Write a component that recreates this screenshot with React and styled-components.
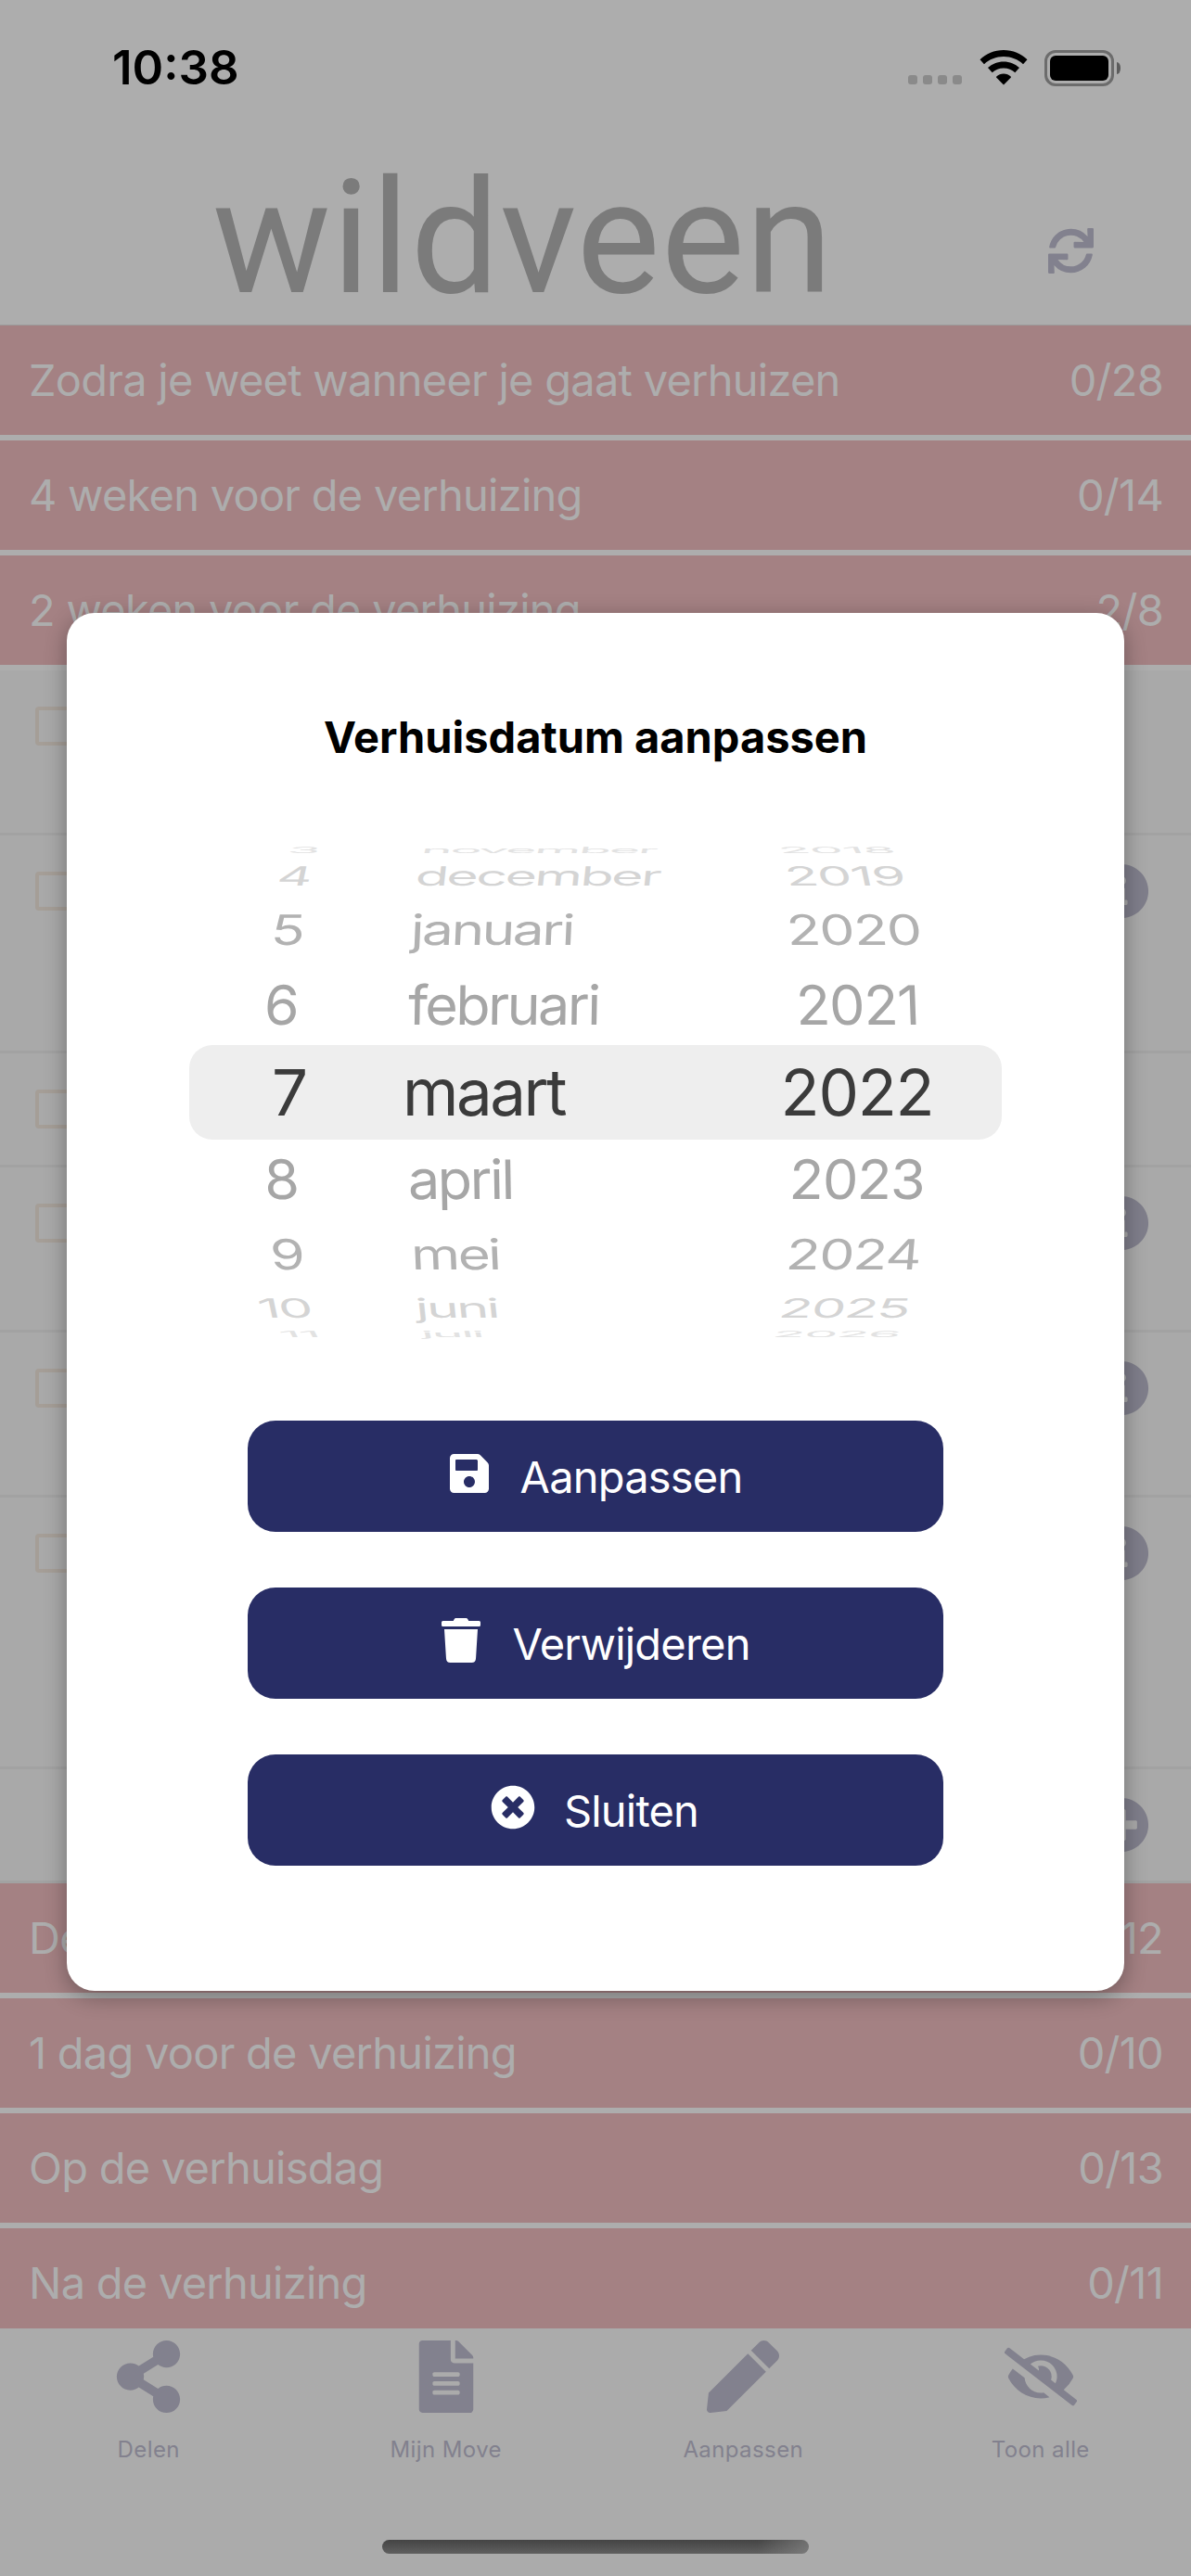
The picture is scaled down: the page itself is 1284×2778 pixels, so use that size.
import React from "react";
import styled, { createGlobalStyle } from "styled-components";
import {
  FaSync,
  FaInfoCircle,
  FaPlusCircle,
  FaSave,
  FaTrash,
  FaTimesCircle,
  FaShareAlt,
  FaFileAlt,
  FaPen,
  FaEyeSlash,
} from "react-icons/fa";

const sectionsBefore = [
  { title: "Zodra je weet wanneer je gaat verhuizen", count: "0/28" },
  { title: "4 weken voor de verhuizing", count: "0/14" },
  { title: "2 weken voor de verhuizing", count: "2/8" },
];

const sectionsAfter = [
  { title: "De week van de verhuizing", count: "0/12" },
  { title: "1 dag voor de verhuizing", count: "0/10" },
  { title: "Op de verhuisdag", count: "0/13" },
  { title: "Na de verhuizing", count: "0/11" },
];

const tasks = [
  { id: 1, height: 178, check: true },
  { id: 2, height: 235, check: true, icon: FaInfoCircle },
  { id: 3, height: 123, check: true },
  { id: 4, height: 178, check: true, icon: FaInfoCircle },
  { id: 5, height: 178, check: true, icon: FaInfoCircle },
  { id: 6, height: 293, check: true, icon: FaInfoCircle },
  { id: 7, height: 123, icon: FaPlusCircle },
];

// shift is the sideways offset per distance from the selected row
const wheels = [
  {
    id: "day",
    values: ["3", "4", "5", "6", "7", "8", "9", "10", "11"],
    align: "right",
    width: 122,
    lean: 1,
    spacing: -2,
    shift: [0, -9, -3, 5, 14],
  },
  {
    id: "month",
    values: [
      "november",
      "december",
      "januari",
      "februari",
      "maart",
      "april",
      "mei",
      "juni",
      "juli",
    ],
    align: "left",
    width: 300,
    lean: 0.5,
    spacing: -2.5,
    shift: [0, 6, 9, 14, 20],
  },
  {
    id: "year",
    values: ["2018", "2019", "2020", "2021", "2022", "2023", "2024", "2025", "2026"],
    align: "center",
    width: 180,
    lean: -1,
    spacing: -1.2,
    shift: [-4, -4, -8, -17, -26],
  },
];

const steps = [
  { height: 102, scale: "1, 1", skew: 0, color: "#3b3b3b" },
  { height: 86, scale: "1, 0.96", skew: 2, color: "#a6a6a6" },
  { height: 76, scale: "0.99, 0.74", skew: 5, color: "#b2b2b2" },
  { height: 40, scale: "0.965, 0.47", skew: 12, color: "#d4d4d4" },
  { height: 16, scale: "0.94, 0.15", skew: 28, color: "#e2e2e2" },
];

const Wheel = ({ values, align, width, lean, spacing, shift }) => (
  <WheelColumn $width={width} $align={align} $spacing={spacing}>
    {values.map((value, i) => {
      const distance = Math.abs(i - 4);
      const step = steps[distance];
      return (
        <WheelRow key={value} $step={step}>
          <WheelText
            $step={step}
            $active={distance === 0}
            $align={align}
            $shift={shift[distance]}
            $lean={i < 4 ? -lean : lean}
          >
            {value}
          </WheelText>
        </WheelRow>
      );
    })}
  </WheelColumn>
);

const Sections = ({ items }) =>
  items.map((item) => (
    <SectionRow key={item.title}>
      <span>{item.title}</span>
      <span>{item.count}</span>
    </SectionRow>
  ));

const App = () => {
  return (
    <>
      <GlobalStyle />
      <Screen>
        <StatusBar>
          <Time>10:38</Time>
          <StatusIcons>
            <SignalDots>
              <i />
              <i />
              <i />
              <i />
            </SignalDots>
            <svg width="52" height="38" viewBox="0 0 52 38">
              <path d="M26 0C36 0 45 4 51.500 10.200L47 15.200C41.500 10 34 7 26 7S10.500 10 5 15.200L.5 10.200C7 4 16 0 26 0Z" />
              <path d="M26 12.500C32.500 12.500 38.500 15 43 19.100L38.300 24.200C35 21.300 30.700 19.500 26 19.500S17 21.300 13.700 24.200L9 19.100C13.500 15 19.500 12.500 26 12.500Z" />
              <path d="M26 25.500C29 25.500 31.600 26.600 33.700 28.600C34 29 34 29.500 33.700 29.800L26 37.500L18.300 29.800C18 29.500 18 29 18.300 28.600C20.400 26.600 23 25.500 26 25.500Z" />
            </svg>
            <Battery>
              <BatteryBody />
              <BatteryTip />
            </Battery>
          </StatusIcons>
        </StatusBar>
        <Header>
          <Logo>wildveen</Logo>
          <FaSync size={49} />
        </Header>
        <Content>
          <Sections items={sectionsBefore} />
          <TaskList>
            {tasks.map(({ id, height, check, icon: Icon }) => (
              <TaskRow key={id} $height={height}>
                {check ? <Checkbox /> : <span />}
                {Icon && <Icon size={60} />}
              </TaskRow>
            ))}
          </TaskList>
          <Sections items={sectionsAfter} />
        </Content>
        <TabBar>
          <Tab>
            <FaShareAlt size={78} />
            <span>Delen</span>
          </Tab>
          <Tab>
            <FaFileAlt size={78} />
            <span>Mijn Move</span>
          </Tab>
          <Tab>
            <FaPen size={78} />
            <span>Aanpassen</span>
          </Tab>
          <Tab>
            <FaEyeSlash size={78} />
            <span>Toon alle</span>
          </Tab>
        </TabBar>
        <HomeIndicator />
      </Screen>
      <Modal>
        <h2>Verhuisdatum aanpassen</h2>
        <Picker>
          {wheels.map((wheel) => (
            <Wheel key={wheel.id} {...wheel} />
          ))}
        </Picker>
        <Actions>
          <Button>
            <FaSave size={48} />
            <span>Aanpassen</span>
          </Button>
          <Button>
            <FaTrash size={48} />
            <span>Verwijderen</span>
          </Button>
          <Button>
            <FaTimesCircle size={48} />
            <span>Sluiten</span>
          </Button>
        </Actions>
      </Modal>
    </>
  );
};

const GlobalStyle = createGlobalStyle`
  * {
    box-sizing: border-box;
  }
  body {
    margin: 0;
    background: #adadad;
    font-family: Inter, "Liberation Sans", sans-serif;
  }
`;

const Screen = styled.div`
  width: 1284px;
  height: 2778px;
  overflow: hidden;
  display: flex;
  flex-direction: column;
  background: #ababab;
`;

const StatusBar = styled.div`
  height: 140px;
  flex-shrink: 0;
  display: flex;
  justify-content: space-between;
  padding: 42px 75px 0 121px;
  background: #adadad;
`;

const Time = styled.div`
  font-size: 51px;
  font-weight: 600;
  line-height: 62px;
`;

const StatusIcons = styled.div`
  display: flex;
  align-items: center;
  height: 62px;
`;

const SignalDots = styled.div`
  display: flex;
  gap: 6px;
  margin: 25px 19px 0 0;
  i {
    width: 10px;
    height: 10px;
    border-radius: 3px;
    background: #8a8a8a;
  }
`;

const Battery = styled.div`
  display: flex;
  align-items: center;
  margin-left: 18px;
`;

const BatteryBody = styled.div`
  width: 75px;
  height: 39px;
  border: 3px solid #6c6c6c;
  border-radius: 12px;
  padding: 3px;
  &::before {
    content: "";
    display: block;
    height: 100%;
    border-radius: 6px;
    background: #000;
  }
`;

const BatteryTip = styled.div`
  width: 4px;
  height: 13px;
  margin: 0 1px 0 3px;
  border-radius: 0 4px 4px 0 / 0 6px 6px 0;
  background: #5c5c5c;
`;

const Header = styled.div`
  height: 211px;
  flex-shrink: 0;
  display: flex;
  justify-content: space-between;
  padding: 0 105px 0 229px;
  border-bottom: 1px solid #9c9c9c;
  background: #adadad;
  color: #82818e;
  svg {
    margin-top: 106px;
  }
`;

const Logo = styled.div`
  font-family: Roboto, sans-serif;
  font-size: 170px;
  font-weight: 400;
  line-height: 200px;
  letter-spacing: 1px;
  margin-top: 17px;
  color: #7b7b7b;
`;

const Content = styled.div`
  height: 2160px;
  flex-shrink: 0;
  overflow: hidden;
  background: #adadad;
`;

const SectionRow = styled.div`
  height: 118px;
  margin-bottom: 6px;
  padding: 0 30px 1px 31px;
  display: flex;
  align-items: center;
  justify-content: space-between;
  font-size: 47px;
  letter-spacing: -0.75px;
  color: #adadad;
  background: #a48183;
`;

const TaskList = styled.div`
  background: #a9a9a9;
`;

const TaskRow = styled.div`
  height: ${({ $height }) => $height}px;
  display: flex;
  justify-content: space-between;
  padding: 30px 45px 0 38px;
  border-bottom: 3px solid #a2a2a2;
  color: #7f7e8b;
`;

const Checkbox = styled.span`
  width: 42px;
  height: 42px;
  margin-top: 9px;
  border: 4px solid #a59e97;
  border-radius: 4px;
`;

const TabBar = styled.div`
  height: 228px;
  flex-shrink: 0;
  display: flex;
  padding-right: 2px;
  color: #82818e;
`;

const Tab = styled.div`
  flex: 1;
  display: flex;
  flex-direction: column;
  align-items: center;
  padding-top: 13px;
  span {
    margin-top: 25px;
    font-size: 24px;
    line-height: 30px;
    letter-spacing: 0.4px;
  }
`;

const HomeIndicator = styled.div`
  width: 460px;
  height: 15px;
  flex-shrink: 0;
  align-self: center;
  border-radius: 8px;
  background: linear-gradient(90deg, transparent 88%, rgba(140, 140, 140, 0.6)),
    linear-gradient(#444, #606060);
`;

const Modal = styled.div`
  position: absolute;
  top: 661px;
  left: 72px;
  width: 1140px;
  height: 1486px;
  border-radius: 30px;
  background: #fff;
  box-shadow: 0 6px 24px rgba(0, 0, 0, 0.33);
  display: flex;
  flex-direction: column;
  align-items: center;
  h2 {
    margin: 105px 0 0;
    font-size: 47px;
    font-weight: 700;
    line-height: 58px;
    letter-spacing: 0;
  }
`;

const Picker = styled.div`
  position: relative;
  display: flex;
  align-items: center;
  gap: 104px;
  width: 876px;
  height: 530px;
  margin-top: 89px;
  padding-left: 4px;
  &::before {
    content: "";
    position: absolute;
    top: 214px;
    left: 0;
    right: 0;
    height: 102px;
    border-radius: 25px;
    background: #eee;
  }
`;

const WheelColumn = styled.div`
  width: ${({ $width }) => $width}px;
  flex-shrink: 0;
  display: flex;
  flex-direction: column;
  align-items: ${({ $align }) =>
    ({ left: "flex-start", right: "flex-end", center: "center" })[$align]};
  letter-spacing: ${({ $spacing }) => $spacing}px;
  & + &:last-child {
    margin-left: -20px;
  }
`;

const WheelRow = styled.div`
  height: ${({ $step }) => $step.height}px;
  display: flex;
  align-items: center;
  color: ${({ $step }) => $step.color};
`;

const WheelText = styled.span`
  position: relative;
  font-size: ${({ $active }) => ($active ? 69 : 61)}px;
  line-height: 80px;
  transform-origin: ${({ $align }) => $align} center;
  transform: translateX(${({ $shift }) => $shift}px)
    skewX(${({ $step, $lean }) => $step.skew * $lean}deg)
    scale(${({ $step }) => $step.scale});
`;

const Actions = styled.div`
  display: flex;
  flex-direction: column;
  gap: 60px;
  margin-top: 89px;
`;

const Button = styled.button`
  width: 750px;
  height: 120px;
  border: none;
  border-radius: 30px;
  background: #282d65;
  color: #fff;
  display: flex;
  align-items: center;
  justify-content: center;
  gap: 31px;
  padding: 0 8px 0 6px;
  font-family: inherit;
  font-size: 47px;
  letter-spacing: -0.8px;
  svg {
    margin-bottom: 6px;
  }
`;

export default App;
